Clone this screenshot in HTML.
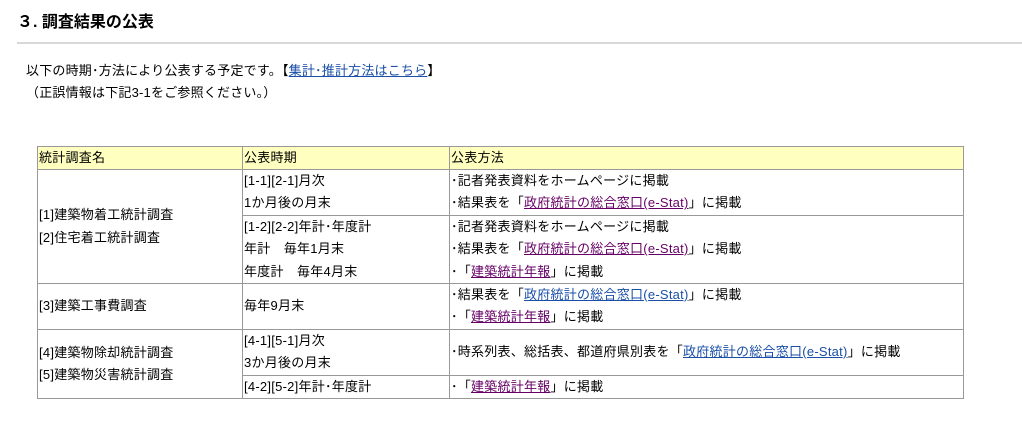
<!DOCTYPE html>
<html><head><meta charset="utf-8"><style>
body{margin:0;width:1022px;height:425px;background:#fff;font-family:"Liberation Sans","Noto Sans CJK JP",sans-serif;font-size:13px;color:#000;position:relative;overflow:hidden}
h2{position:absolute;left:17px;top:12px;margin:0;font-size:16px;font-weight:bold;line-height:22px}
.hr{position:absolute;left:17px;right:0;top:42px;height:2px;background:#d8d8d8}
.p{position:absolute;left:26px;top:60px;line-height:22px;letter-spacing:0.2px}
a{text-decoration:underline}
.b{color:#1a4fa8}.v{color:#660066}
table{position:absolute;left:37px;top:146px;border-collapse:collapse;width:927px;letter-spacing:0.25px}
td{border:1px solid #999;padding:0 1px;line-height:22.4px;vertical-align:middle;white-space:nowrap}
tr.h td{background:#ffffc0;line-height:22px}
</style></head><body>
<h2>３. 調査結果の公表</h2>
<div class="hr"></div>
<div class="p">以下の時期･方法により公表する予定です。【<a class="b">集計･推計方法はこちら</a>】<br>（正誤情報は下記3-1をご参照ください。）</div>
<table>
<colgroup><col style="width:205px"><col style="width:207px"><col></colgroup>
<tr class="h"><td>統計調査名</td><td>公表時期</td><td>公表方法</td></tr>
<tr><td rowspan="2">[1]建築物着工統計調査<br>[2]住宅着工統計調査</td><td>[1-1][2-1]月次<br>1か月後の月末</td><td>･記者発表資料をホームページに掲載<br>･結果表を「<a class="v">政府統計の総合窓口(e-Stat)</a>」に掲載</td></tr>
<tr><td>[1-2][2-2]年計･年度計<br>年計　毎年1月末<br>年度計　毎年4月末</td><td>･記者発表資料をホームページに掲載<br>･結果表を「<a class="v">政府統計の総合窓口(e-Stat)</a>」に掲載<br>･「<a class="v">建築統計年報</a>」に掲載</td></tr>
<tr><td>[3]建築工事費調査</td><td>毎年9月末</td><td>･結果表を「<a class="b">政府統計の総合窓口(e-Stat)</a>」に掲載<br>･「<a class="v">建築統計年報</a>」に掲載</td></tr>
<tr><td rowspan="2">[4]建築物除却統計調査<br>[5]建築物災害統計調査</td><td>[4-1][5-1]月次<br>3か月後の月末</td><td>･時系列表、総括表、都道府県別表を「<a class="b">政府統計の総合窓口(e-Stat)</a>」に掲載</td></tr>
<tr><td>[4-2][5-2]年計･年度計</td><td>･「<a class="v">建築統計年報</a>」に掲載</td></tr>
</table>
</body></html>
